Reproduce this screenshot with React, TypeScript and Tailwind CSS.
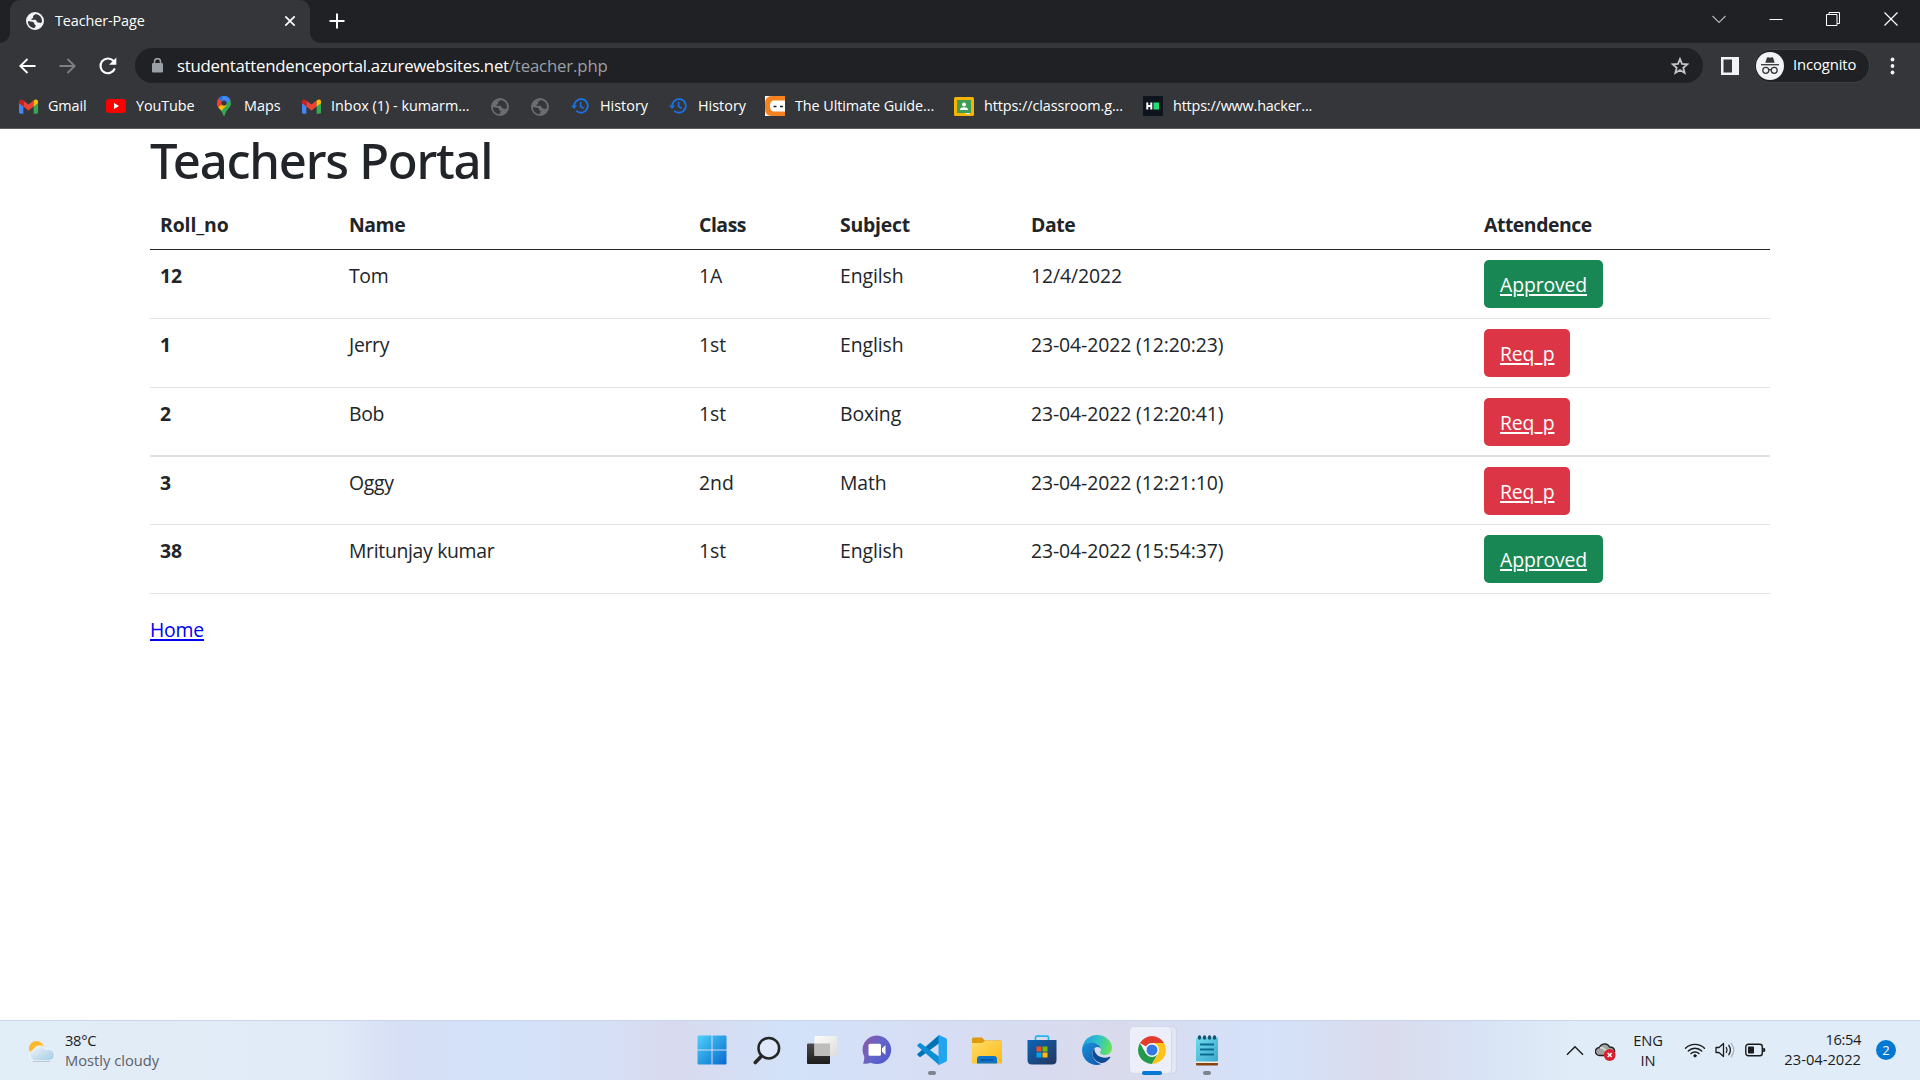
import type { ReactNode } from "react";

/* ---------- browser icons ---------- */

const Globe = ({ color }: { color: string }) => (
  <svg width="18" height="18" viewBox="2 2 20 20" fill={color}>
    <path
      fillRule="evenodd"
      d="M12 2a10 10 0 1 0 0 20 10 10 0 0 0 0-20zM4.1 12.3c2.2.3 4.6.1 6 .9 1.300.8 0.500 2.300 1.800 2.900 1 .4 1.200 1.200.700 2.100-.3.600-1 .8-1.100 1.700-4.300-.1-7.500-3.500-7.400-7.600zM12.600 4.100c-.600 1.100-1.800 1.300-2.600 2.200-.700.8.500 1.500-.2 2.300-.6.700-1.600.3-1.900 1.200-.2.800.7 1 1.600 1 1.500 0 2.700-.5 3.700.4.9.8.300 1.500 1.400 2.100 1.300.700 2.800.2 3.900 1.200.4-.8 1-1.300 1.400-2.500a8 8 0 0 0-7.300-7.900z"
    />
  </svg>
);

const Gmail = () => (
  <svg width="19" height="15" viewBox="0 0 24 18">
    <path fill="#4285f4" d="M0 3v13.400C0 17.300.7 18 1.600 18h3.900V7z" />
    <path fill="#34a853" d="M24 3v13.400c0 .9-.7 1.600-1.600 1.600h-3.900V7z" />
    <path fill="#ea4335" d="M5.500 9V1.500L12 6.400l6.500-4.900V9L12 13.900z" />
    <path fill="#c5221f" d="M0 2.500C0 .4 2.300-.6 3.900.4l1.600 1.100V9L0 4.900z" />
    <path fill="#fbbc04" d="M24 2.500c0-2.100-2.300-3.100-3.900-2.100l-1.600 1.100V9L24 4.900z" />
  </svg>
);

const YouTube = () => (
  <svg width="20" height="14" viewBox="0 0 20 14">
    <rect width="20" height="14" rx="3.200" fill="#f00" />
    <path d="M8 4v6l5-3z" fill="#fff" />
  </svg>
);

const Maps = () => (
  <svg width="14" height="20" viewBox="0 0 14 20">
    <defs>
      <clipPath id="pin">
        <path d="M7 0a7 7 0 0 1 7 7c0 5-4.500 6-6 11.500-.3 1.500-.6 1.500-1 1.500s-.7 0-1-1.500C4.500 13 0 12 0 7a7 7 0 0 1 7-7z" />
      </clipPath>
    </defs>
    <g clipPath="url(#pin)">
      <rect width="14" height="20" fill="#34a853" />
      <path d="M0 0h14v3L7 7z" fill="#4285f4" />
      <path d="M4 0h10v3L8 10z" fill="#4285f4" />
      <path d="M0 0l1.500 2L7 7 2 13-1 8z" fill="#ea4335" />
      <path d="M1 0L6 0 4 5z" fill="#1a73e8" />
      <path d="M7 7l3 2-7 7-3-4z" fill="#fbbc04" />
    </g>
    <circle cx="7" cy="7" r="2.600" fill="#35363a" />
  </svg>
);

const History = () => (
  <svg width="18" height="18" viewBox="0 0 18 18" fill="none" stroke="#1a73e8" strokeWidth="1.800">
    <path d="M3.200 9.500A6.800 6.800 0 1 1 5.300 13.800" />
    <path d="M9.600 5v4.500l3.200 1.900" strokeWidth="1.500" />
    <path d="M0 8.500h6L3.100 12z" fill="#1a73e8" stroke="none" />
  </svg>
);

const CodeGuide = () => (
  <svg width="20" height="20" viewBox="0 0 20 20">
    <rect width="20" height="20" fill="#fff" />
    <path d="M20 0H6Q0 1 0 7v6q0 6 6 7h14v-4.500H9Q5 15.500 5 10t4-5.500h11z" fill="#f58220" />
    <rect x="5.500" y="6.500" width="14.500" height="7.500" rx="3" fill="#fff" />
    <path d="M8.500 10.500h3M15 10.500h3" stroke="#222" strokeWidth="1.600" />
  </svg>
);

const Classroom = () => (
  <svg width="20" height="19" viewBox="0 0 20 19">
    <rect width="20" height="19" rx="1.500" fill="#f4b400" />
    <rect x="3" y="3" width="14" height="13" fill="#3f9e56" />
    <circle cx="10" cy="7.500" r="2" fill="#fff" />
    <path d="M5.800 13c.3-2 2-2.700 4.200-2.700s3.900.7 4.200 2.700z" fill="#fff" />
    <path d="M11.500 16h4v1.200h-4z" fill="#f1f1f1" />
  </svg>
);

const Hacker = () => (
  <svg width="20" height="20" viewBox="0 0 20 20">
    <rect width="20" height="20" fill="#0e141e" />
    <path d="M4.300 6.500v7M8.300 6.500v7M4.300 10h4" stroke="#fff" strokeWidth="2" />
    <rect x="10.500" y="6.500" width="5.500" height="7" fill="#1ee276" />
  </svg>
);

const Incognito = () => (
  <svg width="28" height="28" viewBox="0 0 28 28">
    <circle cx="14" cy="14" r="14" fill="#f1f3f4" />
    <path d="M9.300 10.800L10.800 6q.4-1 1.400-.7l1.800.5 1.800-.5q1-.3 1.400.7l1.500 4.800z" fill="#35363a" />
    <path d="M5 12.700h18" stroke="#35363a" strokeWidth="1.300" />
    <g fill="none" stroke="#35363a" strokeWidth="1.300">
      <circle cx="9.800" cy="18.300" r="3" />
      <circle cx="18.200" cy="18.300" r="3" />
      <path d="M12.800 18q1.200-.8 2.400 0" />
    </g>
  </svg>
);

/* ---------- taskbar icons ---------- */

const Start = () => (
  <svg width="30" height="30" viewBox="0 0 30 30">
    <defs>
      <linearGradient id="win" x1="0" y1="0" x2="1" y2="1">
        <stop offset="0" stopColor="#4fd0fb" />
        <stop offset="1" stopColor="#0669ce" />
      </linearGradient>
    </defs>
    <path
      fill="url(#win)"
      d="M1.500 .5H14.500V14.500H.5V1.500Q.5.500 1.500.5zM15.500.5H28.500Q29.500.5 29.500 1.500V14.500H15.500zM.5 15.500H14.500V29.500H1.500Q.5 29.500.5 28.500zM15.500 15.500H29.500V28.500Q29.500 29.500 28.500 29.500H15.500z"
    />
  </svg>
);

const Search = () => (
  <svg width="28" height="29" viewBox="0 0 28 29" fill="none" stroke="#262626" strokeLinecap="round">
    <circle cx="15.800" cy="12.200" r="10.300" strokeWidth="2.500" fill="#dfe8fb" />
    <path d="M8.300 20.300L2.300 26.500" strokeWidth="3.600" />
  </svg>
);

const TaskView = () => (
  <svg width="30" height="28" viewBox="0 0 30 28">
    <defs>
      <linearGradient id="tvDark" x1="0" y1="0" x2="0" y2="1">
        <stop offset="0" stopColor="#4a4a4a" />
        <stop offset="1" stopColor="#1c1c1c" />
      </linearGradient>
      <linearGradient id="tvLight" x1="0" y1="0" x2="1" y2="1">
        <stop offset="0" stopColor="#fdfdfd" />
        <stop offset="1" stopColor="#dcdcdc" />
      </linearGradient>
    </defs>
    <rect x="0" y="7.500" width="23" height="20.500" rx="1" fill="url(#tvDark)" />
    <rect x="7.500" y="0" width="22.500" height="20" rx="1" fill="url(#tvLight)" />
    <rect x="7.500" y="7.500" width="15.500" height="12.500" fill="#bdbdbb" />
  </svg>
);

const Chat = () => (
  <svg width="30" height="30" viewBox="0 0 30 30">
    <defs>
      <linearGradient id="chat" x1="0" y1="0.200" x2="1" y2="0.800">
        <stop offset="0" stopColor="#8a5aa8" />
        <stop offset="0.500" stopColor="#6264c9" />
        <stop offset="1" stopColor="#5059c9" />
      </linearGradient>
    </defs>
    <path d="M15 .5a14.300 14.300 0 1 1-6.300 27.200Q5 29.500 1 28.500 2.500 26 2.200 21.500A14.300 14.300 0 0 1 15 .5z" fill="url(#chat)" />
    <rect x="6.500" y="8.800" width="12.500" height="12" rx="1.500" fill="#fff" />
    <path d="M20 13.200l3.500-3v9.600l-3.500-3z" fill="#fff" />
  </svg>
);

const Code = () => (
  <svg width="30" height="30" viewBox="0 0 30 30">
    <path d="M22 0L0.600 18.700q-.8.700 0 1.500l1.800 1.600q.7.500 1.400 0L22.500 8z" fill="#0072b8" />
    <path d="M22 30L0.600 11.300q-.8-.7 0-1.500l1.800-1.600q.7-.5 1.400 0L22.500 22z" fill="#0b8fd6" />
    <path d="M22 0l7 3.300q1 .5 1 1.600v20.200q0 1.100-1 1.600L22 30q-.5.200-.5-1V1q0-1.200.5-1z" fill="#24a3ef" />
  </svg>
);

const Folder = () => (
  <svg width="30" height="27" viewBox="0 0 30 27">
    <defs>
      <linearGradient id="fold" x1="0" y1="0" x2="1" y2="1">
        <stop offset="0" stopColor="#ffdc6a" />
        <stop offset="1" stopColor="#fdba12" />
      </linearGradient>
    </defs>
    <path d="M0 2Q0 .5 1.500.5H10l3 3h15.500Q30 3.500 30 5v5H0z" fill="#dd9b0c" />
    <path d="M0 6h10l3-2.200h17V26.500H0z" fill="url(#fold)" />
    <path d="M5 26.500V22q0-3 3-3h14q3 0 3 3v4.500z" fill="#0d74c9" />
    <path d="M8.500 23h13" stroke="#064a8c" strokeWidth="1.200" />
  </svg>
);

const Store = () => (
  <svg width="30" height="30" viewBox="0 0 30 30">
    <defs>
      <linearGradient id="store" x1="0" y1="0" x2="1" y2="1">
        <stop offset="0" stopColor="#0c66b8" />
        <stop offset="1" stopColor="#25345c" />
      </linearGradient>
    </defs>
    <path d="M8.500 6V2.500Q8.500 1.200 9.800 1.200H20.200Q21.500 1.200 21.500 2.500V6" fill="none" stroke="#22b5ee" strokeWidth="1.700" />
    <path d="M.5 5h29v20q0 4.500-4.500 4.500H5Q.5 29.500.5 25z" fill="url(#store)" />
    <rect x="9.500" y="11.500" width="5" height="5" fill="#f25022" />
    <rect x="15.500" y="11.500" width="5" height="5" fill="#7fba00" />
    <rect x="9.500" y="17.500" width="5" height="5" fill="#00a4ef" />
    <rect x="15.500" y="17.500" width="5" height="5" fill="#ffb900" />
  </svg>
);

const Edge = () => (
  <svg width="30" height="30" viewBox="0 0 30 30">
    <defs>
      <linearGradient id="edgeTop" x1="0" y1="0.300" x2="1" y2="0.500">
        <stop offset="0" stopColor="#1b9de2" />
        <stop offset="0.500" stopColor="#2fc2c9" />
        <stop offset="1" stopColor="#66e356" />
      </linearGradient>
      <linearGradient id="edgeLeft" x1="0" y1="0" x2="0.600" y2="1">
        <stop offset="0" stopColor="#1a8fd8" />
        <stop offset="1" stopColor="#1160b4" />
      </linearGradient>
    </defs>
    <path d="M.2 13.500C1 5.800 7.300 0 15 0c8.600 0 15 6.200 15 12.800 0 4.300-3.200 7.200-7 7.200-3.400 0-5-1.400-5-2.500 0-.8 1-1.200 1-3.200 0-2.800-3-5.200-7.500-5.200C6.500 9.100 2 11 .2 13.500z" fill="url(#edgeTop)" />
    <path d="M.2 13.500C1.500 9.500 6 7.200 10.500 7.700c5 .5 8 3.300 8.500 6.300-1-1.500-2.500-2.300-4-2-3 .6-5 4-4.500 7.500.6 4.500 4 8.500 9 9.500-1.400.7-3 1-4.500 1C6 30 -.8 22.500.2 13.500z" fill="url(#edgeLeft)" />
    <path d="M12.500 13.500C9.500 16 10 21 13 24.500c2.500 3 6.500 4 9.500 3 2.400-1.200 4.400-3 5.700-5 .3-.6-.2-1-.8-.7-1.200.6-2.700 1-4.400 1-5.500 0-11-3.800-10.500-9.300z" fill="#0c4a94" />
  </svg>
);

const Chrome = () => (
  <svg width="28" height="28" viewBox="0 0 28 28">
    <circle cx="14" cy="14" r="14" fill="#fff" />
    <path d="M14 14L1.876 7A14 14 0 0 1 26.124 7H14z" fill="#e33b2e" />
    <path d="M1.876 7A14 14 0 0 0 14 28L20.060 17.500 14 14 7.940 17.500z" fill="#229a4a" />
    <path d="M26.124 7A14 14 0 0 1 14 28L20.060 17.500 14 14V7z" fill="#fcc419" />
    <circle cx="14" cy="14" r="7" fill="#fff" />
    <circle cx="14" cy="14" r="5.500" fill="#3478e5" />
  </svg>
);

const Notepad = () => (
  <svg width="22" height="31" viewBox="0 0 22 31">
    <defs>
      <linearGradient id="note" x1="0" y1="0" x2="1" y2="1">
        <stop offset="0" stopColor="#6fdcee" />
        <stop offset="1" stopColor="#3ba6cd" />
      </linearGradient>
    </defs>
    <rect x="0" y="26" width="22" height="4.500" rx="1" fill="#8a420e" />
    <rect x="0" y="25" width="22" height="3" fill="#f1ece6" />
    <rect x="0" y="2.500" width="22" height="24" rx="1" fill="url(#note)" />
    <path d="M4 9.500h14M4 14.500h14M4 19.500h14" stroke="#0b6c91" strokeWidth="2" />
    <g fill="#17536e">
      <ellipse cx="3.500" cy="2.500" rx="1.700" ry="2.300" />
      <ellipse cx="8.500" cy="2.500" rx="1.700" ry="2.300" />
      <ellipse cx="13.500" cy="2.500" rx="1.700" ry="2.300" />
      <ellipse cx="18.500" cy="2.500" rx="1.700" ry="2.300" />
    </g>
  </svg>
);

const Weather = () => (
  <svg width="28" height="22" viewBox="0 0 28 22">
    <defs>
      <linearGradient id="cloud" x1="0" y1="0" x2="1" y2="1">
        <stop offset="0" stopColor="#f4f9fd" />
        <stop offset="0.500" stopColor="#c9dfee" />
        <stop offset="1" stopColor="#a3cde8" />
      </linearGradient>
    </defs>
    <circle cx="8.500" cy="8.500" r="7.500" fill="#fdb92c" />
    <path d="M6 20.500a5.300 5.300 0 0 1-.5-10.300C7 5.500 14.500 4 17.500 9.200c4-1 9 1 9 5.800 0 3.500-2.500 5.500-5.500 5.500z" fill="url(#cloud)" stroke="#f4f9fd" strokeWidth="1" />
    <path d="M5 21.300h17" stroke="#a9bccb" strokeWidth="0.900" />
  </svg>
);

const CloudError = () => (
  <svg width="21" height="20" viewBox="0 0 21 20">
    <path d="M4.500 13.500a4 4 0 0 1-.2-8C6 1.200 12.500.2 14.500 5c3 0 5 1.500 5.200 4.500L14 13.500z" fill="#a3a3a3" stroke="#1f1f1f" strokeWidth="1.300" />
    <path d="M5 6q3-1 5 2l7 3" stroke="#d7d7d7" strokeWidth="2" fill="none" />
    <circle cx="14.700" cy="13" r="5.900" fill="#d9202e" />
    <path d="M12.700 11l4 4M16.700 11l-4 4" stroke="#fff" strokeWidth="1.500" />
  </svg>
);

const Wifi = () => (
  <svg width="22" height="16" viewBox="0 0 22 16" fill="none" stroke="#1b1b1b" strokeWidth="1.400" strokeLinecap="round">
    <path d="M1.500 6.300a13.400 13.400 0 0 1 19 0M4.300 9a9.500 9.500 0 0 1 13.400 0M7 11.600a5.700 5.700 0 0 1 8 0" />
    <circle cx="11" cy="13.800" r="1.300" fill="#1b1b1b" strokeWidth="0.600" />
  </svg>
);

const Volume = () => (
  <svg width="21" height="18" viewBox="0 0 21 18" fill="none" stroke="#1b1b1b" strokeWidth="1.300" strokeLinecap="round" strokeLinejoin="round">
    <path d="M1 6.500h3L8.500 2.500v13L4 11.500H1z" />
    <path d="M11.300 6.500q1.600 2.500 0 5M13.800 4.300q3.200 4.700 0 9.400" />
    <path d="M16.300 2.300q5 6.700 0 13.400" stroke="#aab4be" />
  </svg>
);

const Battery = () => (
  <svg width="21" height="14" viewBox="0 0 21 14">
    <rect x="0.800" y="1.300" width="16.500" height="11.400" rx="2.500" fill="none" stroke="#1b1b1b" strokeWidth="1.400" />
    <rect x="3" y="3.500" width="6" height="7" rx="0.800" fill="#1b1b1b" />
    <path d="M18.200 4.800q2.200 0 2.200 2.200t-2.200 2.200z" fill="#1b1b1b" />
  </svg>
);

/* ---------- browser chrome ---------- */

const TabStrip = () => (
  <div className="flex h-[43px] bg-[#202124] pl-[10px] text-white">
    <div className="relative flex h-[43px] w-[300px] items-center rounded-t-[10px] bg-[#35363a] pl-4">
      <div className="absolute -left-[10px] bottom-0 h-[10px] w-[10px] bg-[radial-gradient(circle_at_0_0,#202124_9.500px,#35363a_10px)]" />
      <div className="absolute -right-[10px] bottom-0 h-[10px] w-[10px] bg-[radial-gradient(circle_at_100%_0,#202124_9.500px,#35363a_10px)]" />
      <div className="-mt-[2px]"><Globe color="#f1f3f4" /></div>
      <span className="-mt-[2px] ml-[11px] w-[219px] text-[14.400px] tracking-[-0.100px]">Teacher-Page</span>
      <svg className="-mt-[2px] ml-[10px]" width="12" height="12" viewBox="0 0 12 12" stroke="#fff" strokeWidth="1.700">
        <path d="M1.300 1.300l9.400 9.400M10.700 1.300L1.300 10.700" />
      </svg>
    </div>
    <svg className="ml-[19px] mt-[13px]" width="16" height="16" viewBox="0 0 16 16" stroke="#fff" strokeWidth="2">
      <path d="M8 .5v15M.5 8h15" />
    </svg>
    <div className="ml-auto flex h-[37px] items-center text-white">
      <svg className="mr-[43px]" width="14" height="14" viewBox="0 0 14 14" fill="none" stroke="#b0b0b0" strokeWidth="1.200">
        <path d="M.5 4l6.500 6.500L13.500 4" />
      </svg>
      <svg className="mr-[43px]" width="14" height="14" viewBox="0 0 14 14" stroke="#fff" strokeWidth="1">
        <path d="M.5 7.500h13" />
      </svg>
      <svg className="mr-[44px]" width="14" height="14" viewBox="0 0 14 14" fill="none" stroke="#fff" strokeWidth="1">
        <path d="M.5 2.500h10.500v11H.5zM3 2.500v-2h10.500v11H11" />
      </svg>
      <svg className="mr-[22px]" width="14" height="14" viewBox="0 0 14 14" stroke="#fff" strokeWidth="1.200">
        <path d="M.5.500l13 13M13.500.5l-13 13" />
      </svg>
    </div>
  </div>
);

const Toolbar = () => (
  <div className="flex h-[45px] items-center bg-[#35363a] pl-[18px]">
    <svg width="20" height="18" viewBox="0 0 20 18" fill="none" stroke="#fff" strokeWidth="1.800">
      <path d="M17.500 9H2.500M9.500 2L2.300 9l7.200 7" />
    </svg>
    <svg className="ml-5" width="20" height="18" viewBox="0 0 20 18" fill="none" stroke="#7e7f82" strokeWidth="1.800">
      <path d="M1.500 9h15.500M9.500 2l7.200 7-7.200 7" />
    </svg>
    <svg className="ml-5" width="20" height="20" viewBox="0 0 20 20" fill="none" stroke="#fff" strokeWidth="2.100">
      <path d="M16.800 12.500A7.400 7.400 0 1 1 15.300 4.800L17 6.700" />
      <path d="M18.300 1.500v7.200h-7.200z" fill="#fff" stroke="none" />
    </svg>
    <div className="ml-[17px] flex h-[35px] w-[1568px] items-center rounded-full bg-[#202124] pl-[17px]">
      <svg width="11" height="15" viewBox="0 0 11 15">
        <rect x="0" y="5" width="11" height="9.500" rx="1.300" fill="#9aa0a6" />
        <path d="M2.500 6V3.700a3 3 0 0 1 6 0V6" fill="none" stroke="#9aa0a6" strokeWidth="1.500" />
      </svg>
      <span className="ml-[14px] text-[16.800px] tracking-[-0.250px] text-white">studentattendenceportal.azurewebsites.net</span>
      <span className="text-[16.800px] tracking-[-0.160px] text-[#9aa0a6]">/teacher.php</span>
      <svg className="ml-auto mr-[14px]" width="18" height="18" viewBox="0 0 18 18" fill="none" stroke="#c4c7c9" strokeWidth="1.800">
        <path d="M9 2l2 4.900 5.300.4-4 3.400 1.300 5.200L9 13.100l-4.600 2.800 1.300-5.200-4-3.400L7 6.900z" />
      </svg>
    </div>
    <svg className="ml-[18px]" width="18" height="18" viewBox="0 0 18 18">
      <rect width="18" height="18" fill="#f1f3f4" />
      <rect x="2.500" y="2.500" width="8.500" height="13" fill="#35363a" />
    </svg>
    <div className="ml-[15px] flex h-[34px] w-[116px] items-center rounded-full border border-[#3f4044] bg-[#202124] pl-px text-white">
      <Incognito />
      <span className="ml-[9px] -mt-[2px] text-[14.800px] tracking-[-0.100px]">Incognito</span>
    </div>
    <svg className="ml-[20px]" width="5" height="18" viewBox="0 0 5 18" fill="#f1f3f4">
      <circle cx="2.500" cy="2.500" r="1.900" />
      <circle cx="2.500" cy="9" r="1.900" />
      <circle cx="2.500" cy="15.500" r="1.900" />
    </svg>
  </div>
);

type Bookmark = { icon: ReactNode; label?: string; width: string };

const bookmarks: Bookmark[] = [
  { icon: <Gmail />, label: "Gmail", width: "w-[88px] tracking-[-0.100px]" },
  { icon: <YouTube />, label: "YouTube", width: "w-[108px] tracking-[-0.100px]" },
  { icon: <Maps />, label: "Maps", width: "w-[87px]" },
  { icon: <Gmail />, label: "Inbox (1) - kumarm...", width: "w-[189px]" },
  { icon: <Globe color="#6a6c70" />, width: "w-[40px]" },
  { icon: <Globe color="#6a6c70" />, width: "w-[40px]" },
  { icon: <History />, label: "History", width: "w-[98px]" },
  { icon: <History />, label: "History", width: "w-[97px]" },
  { icon: <CodeGuide />, label: "The Ultimate Guide...", width: "w-[189px] tracking-[-0.080px]" },
  { icon: <Classroom />, label: "https://classroom.g...", width: "w-[189px] tracking-[-0.080px]" },
  { icon: <Hacker />, label: "https://www.hacker...", width: "w-[189px] tracking-[-0.180px]" },
];

const BookmarksBar = () => (
  <div className="flex h-[41px] items-center border-b border-[#5b5c60] bg-[#35363a] pb-[3px] pl-[18px] text-[14.400px] text-white">
    {bookmarks.map((b, i) => (
      <div key={i} className={`flex shrink-0 items-center whitespace-nowrap ${b.width}`}>
        <span className="flex w-5 items-center justify-center">{b.icon}</span>
        {b.label && <span className="-mt-px ml-[10px]">{b.label}</span>}
      </div>
    ))}
  </div>
);

/* ---------- page ---------- */

type Row = { roll: string; name: string; cls: string; subject: string; date: string; approved: boolean; height: string };

const rows: Row[] = [
  { roll: "12", name: "Tom", cls: "1A", subject: "Engilsh", date: "12/4/2022", approved: true, height: "h-[69px] border-b" },
  { roll: "1", name: "Jerry", cls: "1st", subject: "English", date: "23-04-2022 (12:20:23)", approved: false, height: "h-[69px] border-b" },
  { roll: "2", name: "Bob", cls: "1st", subject: "Boxing", date: "23-04-2022 (12:20:41)", approved: false, height: "h-[69px] border-b-2" },
  { roll: "3", name: "Oggy", cls: "2nd", subject: "Math", date: "23-04-2022 (12:21:10)", approved: false, height: "h-[68px] border-b" },
  { roll: "38", name: "Mritunjay kumar", cls: "1st", subject: "English", date: "23-04-2022 (15:54:37)", approved: true, height: "h-[69px] border-b" },
];

const GRID = "grid grid-cols-[189px_350px_141px_191px_453px_296px] *:pl-[10px] pt-[10px]";

const TeachersPage = () => (
  <main className="flex-1 bg-white pl-[150px] text-[19.400px] leading-[30px] text-[#212529]">
    <h1 className="h-[71px] pt-px font-['Noto_Sans'] text-[49px] font-medium leading-[60px] tracking-[-1.250px]">Teachers Portal</h1>
    <div className="w-[1620px]">
      <div className={`${GRID} h-[50px] border-b border-[#212529] font-bold tracking-[-0.450px]`}>
        <span className="tracking-[-0.100px]">Roll_no</span>
        <span>Name</span>
        <span>Class</span>
        <span className="tracking-[-0.200px]">Subject</span>
        <span>Date</span>
        <span>Attendence</span>
      </div>
      {rows.map((r) => (
        <div key={r.roll} className={`${GRID} ${r.height} border-[#dee2e6]`}>
          <span className="pt-px font-bold">{r.roll}</span>
          <span className="pt-px tracking-[-0.320px]">{r.name}</span>
          <span className="pt-px">{r.cls}</span>
          <span className="pt-px tracking-[-0.100px]">{r.subject}</span>
          <span className="pt-px tracking-[-0.100px]">{r.date}</span>
          <div>
            <span
              className={`inline-block h-[48px] rounded-[5px] pl-4 pt-[10px] tracking-[-0.120px] text-white underline decoration-2 underline-offset-[2px] ${
                r.approved ? "w-[119px] bg-[#198754]" : "w-[86px] bg-[#dc3545]"
              }`}
            >
              {r.approved ? "Approved" : "Req_p"}
            </span>
          </div>
        </div>
      ))}
    </div>
    <p className="mt-[21px]">
      <span className="tracking-[-0.200px] text-[#0000ee] underline decoration-2 underline-offset-[2px]">Home</span>
    </p>
  </main>
);

/* ---------- taskbar ---------- */

const apps: { icon: ReactNode; mark?: string }[] = [
  { icon: <Start /> },
  { icon: <Search /> },
  { icon: <TaskView /> },
  { icon: <Chat /> },
  { icon: <Code />, mark: "w-2 bg-[#7d828c]" },
  { icon: <Folder /> },
  { icon: <Store /> },
  { icon: <Edge /> },
  { icon: <Chrome />, mark: "w-5 bg-[#0078d4]" },
  { icon: <Notepad />, mark: "w-2 bg-[#7d828c]" },
];

const Taskbar = () => (
  <footer className="flex h-[60px] border-t border-[#c9d6ea] bg-[linear-gradient(90deg,#e1edf7_0%,#e1ebf7_17%,#d6dff6_21%,#d3e2f9_26%,#d6dff5_32%,#d8daee_35%,#d2e2f9_41%,#d7ddf3_50%,#d9daec_58%,#d4e2fa_66%,#dadbec_72%,#d8e3f5_77%,#e0ecf7_82%,#e0ecf7_100%)] text-[14.700px] leading-5 text-[#1b1b1b]">
    <div className="flex w-[684px] pl-[28px]">
      <div className="mt-[19px]"><Weather /></div>
      <div className="ml-[9px] mt-[9px] leading-5">
        <div className="tracking-[-0.300px]">38°C</div>
        <div className="text-[#5c6066]">Mostly cloudy</div>
      </div>
    </div>
    <div className="flex">
      {apps.map((a, i) => (
        <div key={i} className="relative flex h-[58px] w-[55px] items-center justify-center">
          {i === 8 && (
            <>
              <div className="absolute left-[10px] top-[5px] h-[48px] w-[43px] rounded-[5px] border border-[#cfd5e6] bg-[#e3e7f5]" />
              <div className="absolute left-[5px] top-[5px] h-[48px] w-[43px] rounded-[5px] border border-[#d5daea] bg-[#eceff9]" />
            </>
          )}
          <div className="relative">{a.icon}</div>
          {a.mark && <div className={`absolute bottom-[4px] h-1 rounded-full ${a.mark}`} />}
        </div>
      ))}
    </div>
    <div className="flex flex-1 items-center pl-[332px] pb-[1px]">
      <svg width="18" height="11" viewBox="0 0 18 11" fill="none" stroke="#1b1b1b" strokeWidth="1.400">
        <path d="M1 9.800l8-8 8 8" />
      </svg>
      <div className="ml-[11px] mt-[3px]"><CloudError /></div>
      <div className="ml-[15px] w-[34px] text-center leading-5 -mt-px tracking-[-0.200px]">
        <div>ENG</div>
        <div>IN</div>
      </div>
      <div className="ml-[19px]"><Wifi /></div>
      <div className="ml-[9px]"><Volume /></div>
      <div className="ml-[9px]"><Battery /></div>
      <div className="ml-[11px] w-[84px] whitespace-nowrap text-right leading-5 -mt-[3px]">
        <div className="tracking-[-0.400px]">16:54</div>
        <div>23-04-2022</div>
      </div>
      <div className="ml-[15px] flex h-5 w-5 items-center justify-center rounded-full bg-[#0078d4] text-[13px] text-white">2</div>
    </div>
  </footer>
);

export default function App() {
  return (
    <div className="flex h-[1080px] w-[1920px] flex-col overflow-hidden font-['Open_Sans',sans-serif]">
      <TabStrip />
      <Toolbar />
      <BookmarksBar />
      <TeachersPage />
      <Taskbar />
    </div>
  );
}
